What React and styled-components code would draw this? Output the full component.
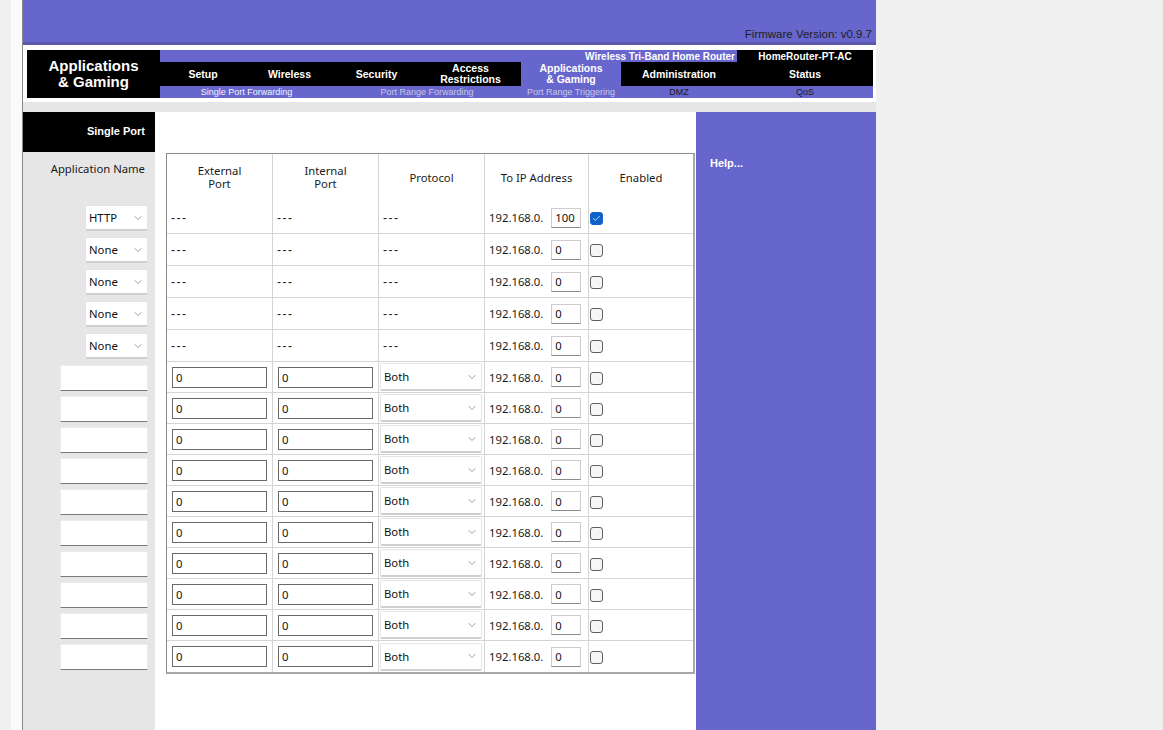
import React from "react";
import styled, { createGlobalStyle } from "styled-components";
import { ChevronDown, Check } from "lucide-react";

const PURPLE = "#6766cc";

const GlobalStyle = createGlobalStyle`
  *, *::before, *::after { box-sizing: border-box; }
  html, body { margin: 0; padding: 0; background: #f0f0f0; }
  body { font-family: "Noto Sans", "Liberation Sans", sans-serif; color: #1a1a1a; }
`;

const Page = styled.div`
  display: flex;
  min-height: 730px;
  padding-left: 11px;
`;

const Gutter = styled.div`
  width: 11px;
  background: #fafafa;
`;

const Frame = styled.div`
  width: 854px;
  border-left: 1px solid #8a8a8a;
  display: flex;
  flex-direction: column;
  background: #fff;
`;

const TopBar = styled.header`
  height: 45px;
  background: ${PURPLE};
  border-bottom: 3px solid #5b5aa8;
  display: flex;
  align-items: flex-end;
  justify-content: flex-end;
  padding: 0 4px 1px 0;
  font: 11.5px/14px "Liberation Sans", Arial, sans-serif;
  color: #1e1e1e;
`;

const NavWrap = styled.div`
  padding: 5px 3px 4px 4px;
  background: #fff;
`;

const Nav = styled.nav`
  display: grid;
  grid-template-columns: 133px 713px;
  height: 48px;
  font-family: "Liberation Sans", Arial, sans-serif;
  font-weight: bold;
  color: #fff;
`;

const Brand = styled.div`
  background: #000;
  display: flex;
  align-items: center;
  justify-content: center;
  text-align: center;
  font-size: 15px;
  line-height: 16px;
`;

const NavGrid = styled.div`
  display: grid;
  grid-template-columns: 86px 87px 87px 101px 100px 116px 136px;
  grid-template-rows: 12px 24px 12px;
`;

const Banner = styled.div`
  grid-column: 1 / 7;
  background: ${PURPLE};
  text-align: right;
  font-size: 10px;
  line-height: 13px;
  padding-right: 2px;
`;

const Model = styled.div`
  background: #000;
  text-align: center;
  font-size: 10px;
  line-height: 13px;
`;

const Tab = styled.div`
  background: ${(p) => (p.$active ? PURPLE : "#000")};
  display: flex;
  align-items: center;
  justify-content: center;
  text-align: center;
  font-size: 10.5px;
  line-height: 11px;
`;

const SubTab = styled.div`
  grid-column: span ${(p) => p.$span || 1};
  background: ${PURPLE};
  text-align: center;
  font: 9px/12px "Liberation Sans", Arial, sans-serif;
  color: ${(p) => p.$tone};
`;

const Band = styled.div`
  height: 10px;
  background: #e6e6e6;
`;

const Main = styled.div`
  flex: 1;
  display: grid;
  grid-template-columns: 132px 541px 180px;
`;

const LeftCol = styled.div`
  background: #e6e6e6;
`;

const SectionTitle = styled.div`
  height: 40px;
  background: #000;
  color: #fff;
  display: flex;
  align-items: center;
  justify-content: flex-end;
  padding: 0 10px 2px 0;
  font: bold 11px "Liberation Sans", Arial, sans-serif;
`;

const FieldLabel = styled.div`
  height: 50px;
  padding: 9px 10px 0 0;
  text-align: right;
  font-size: 11.3px;
  line-height: 15px;
`;

const LeftRow = styled.div`
  height: ${(p) => p.$h}px;
  display: flex;
  align-items: center;
  justify-content: flex-end;
  padding-right: 7px;
`;

const SelectBox = styled.div`
  width: ${(p) => p.$w}px;
  height: ${(p) => p.$h}px;
  display: flex;
  align-items: center;
  justify-content: space-between;
  padding: 0 3px 0 3px;
  background: #fff;
  border: 1px solid #e4e4e4;
  border-bottom: 2px solid #cfcfcf;
  border-radius: 2px;
  font-size: 11.3px;
  color: #111;
  svg { color: #5a5a5a; }
`;

const NameInput = styled.input`
  width: 88px;
  height: 26px;
  background: #fff;
  border: 1px solid #ececec;
  border-bottom: 1px solid #7a7a7a;
  padding: 0 3px;
  font: 11.3px "Noto Sans", sans-serif;
  outline: none;
`;

const Center = styled.div`
  background: #fff;
  padding: 41px 0 0 11px;
`;

const Table = styled.table`
  width: 528px;
  table-layout: fixed;
  border-collapse: separate;
  border-spacing: 0;
  border: 1px solid #8c8c8c;
  border-bottom-width: 2px;
  border-right-width: 2px;
  border-bottom-color: #a8a8a8;
  border-right-color: #a8a8a8;
  font-size: 11.3px;
`;

const Th = styled.th`
  width: ${(p) => p.$w}px;
  height: 48px;
  font-weight: normal;
  line-height: 13px;
  text-align: center;
  vertical-align: middle;
  padding: 0 4px 2px;
  border-right: ${(p) => (p.$last ? "none" : "1px solid #d4d4d4")};
`;

const Td = styled.td`
  height: ${(p) => p.$h}px;
  padding: 0 ${(p) => p.$pad ?? 4}px;
  vertical-align: middle;
  white-space: nowrap;
  border-right: ${(p) => (p.$last ? "none" : "1px solid #d4d4d4")};
  border-bottom: ${(p) => (p.$end ? "none" : "1px solid #d4d4d4")};
`;

const Dash = styled.span`
  font-family: "Liberation Sans", Arial, sans-serif;
  font-size: 12px;
  letter-spacing: 1.5px;
`;

const PortInput = styled.input`
  display: block;
  width: 95px;
  height: 21px;
  border: 1px solid #6a6a6a;
  padding: 0 3px;
  font: 11.3px "Noto Sans", sans-serif;
  color: #111;
  outline: none;
`;

const IpWrap = styled.div`
  display: flex;
  align-items: center;
  gap: 8px;
`;

const OctetInput = styled.input`
  width: 30px;
  height: 20px;
  border: 1px solid #cdcdcd;
  border-bottom-color: #8c8c8c;
  padding: 0 3px;
  font: 11.3px "Noto Sans", sans-serif;
  color: #111;
  outline: none;
`;

const Box = styled.span`
  display: inline-flex;
  align-items: center;
  justify-content: center;
  width: 13px;
  height: 13px;
  margin: 0 0 0 1px;
  vertical-align: middle;
  border-radius: 3px;
  border: 1px solid ${(p) => (p.$checked ? "#0f62c9" : "#5f5f5f")};
  background: ${(p) => (p.$checked ? "#0f62c9" : "#f6f6f6")};
  color: #fff;
`;

const HelpCol = styled.aside`
  background: ${PURPLE};
  padding: 44px 0 0 14px;
  color: #fff;
  font: bold 11px/14px "Liberation Sans", Arial, sans-serif;
`;

const tabs = [
  { label: "Setup" },
  { label: "Wireless" },
  { label: "Security" },
  { label: ["Access", "Restrictions"] },
  { label: ["Applications", "& Gaming"], active: true },
  { label: "Administration" },
  { label: "Status" },
];

const subTabs = [
  { label: "Single Port Forwarding", span: 2, tone: "#f4f4ff" },
  { label: "Port Range Forwarding", span: 2, tone: "#c9c9e4" },
  { label: "Port Range Triggering", tone: "#c9c9e4" },
  { label: "DMZ", tone: "#1a1a2a" },
  { label: "QoS", tone: "#1a1a2a" },
];

const presets = [
  { app: "HTTP", ip: "100", on: true },
  { app: "None", ip: "0" },
  { app: "None", ip: "0" },
  { app: "None", ip: "0" },
  { app: "None", ip: "0" },
];

const customs = Array.from({ length: 10 }, () => ({ ext: "0", int: "0", proto: "Both", ip: "0" }));

const Select = ({ value, w, h }) => (
  <SelectBox $w={w} $h={h}>
    <span>{value}</span>
    <ChevronDown size={12} strokeWidth={1.2} />
  </SelectBox>
);

const Checkbox = ({ checked }) => (
  <Box $checked={checked}>{checked && <Check size={9} strokeWidth={2} />}</Box>
);

const IpCell = ({ ip, h, end }) => (
  <Td $h={h} $end={end} $pad={4}>
    <IpWrap>
      <span>192.168.0.</span>
      <OctetInput readOnly value={ip} />
    </IpWrap>
  </Td>
);

export default function App() {
  return (
    <>
      <GlobalStyle />
      <Page>
        <Gutter />
        <Frame>
          <TopBar>Firmware Version: v0.9.7</TopBar>
          <NavWrap>
            <Nav>
              <Brand>
                Applications
                <br />& Gaming
              </Brand>
              <NavGrid>
                <Banner>Wireless Tri-Band Home Router</Banner>
                <Model>HomeRouter-PT-AC</Model>
                {tabs.map((t, i) => (
                  <Tab key={i} $active={t.active}>
                    {Array.isArray(t.label) ? (
                      <span>
                        {t.label[0]}
                        <br />
                        {t.label[1]}
                      </span>
                    ) : (
                      t.label
                    )}
                  </Tab>
                ))}
                {subTabs.map((s) => (
                  <SubTab key={s.label} $span={s.span} $tone={s.tone}>
                    {s.label}
                  </SubTab>
                ))}
              </NavGrid>
            </Nav>
          </NavWrap>
          <Band />
          <Main>
            <LeftCol>
              <SectionTitle>Single Port</SectionTitle>
              <FieldLabel>Application Name</FieldLabel>
              {presets.map((r, i) => (
                <LeftRow key={"p" + i} $h={32}>
                  <Select value={r.app} w={63} h={26} />
                </LeftRow>
              ))}
              {customs.map((r, i) => (
                <LeftRow key={"c" + i} $h={31}>
                  <NameInput readOnly value="" />
                </LeftRow>
              ))}
            </LeftCol>
            <Center>
              <Table>
                <thead>
                  <tr>
                    <Th $w={106}>
                      External
                      <br />
                      Port
                    </Th>
                    <Th $w={106}>
                      Internal
                      <br />
                      Port
                    </Th>
                    <Th $w={106}>Protocol</Th>
                    <Th $w={104}>To IP Address</Th>
                    <Th $w={104} $last>
                      Enabled
                    </Th>
                  </tr>
                </thead>
                <tbody>
                  {presets.map((r, i) => (
                    <tr key={"p" + i}>
                      <Td $h={32}>
                        <Dash>---</Dash>
                      </Td>
                      <Td $h={32}>
                        <Dash>---</Dash>
                      </Td>
                      <Td $h={32}>
                        <Dash>---</Dash>
                      </Td>
                      <IpCell ip={r.ip} h={32} />
                      <Td $h={32} $pad={0} $last>
                        <Checkbox checked={r.on} />
                      </Td>
                    </tr>
                  ))}
                  {customs.map((r, i) => {
                    const end = i === customs.length - 1;
                    return (
                      <tr key={"c" + i}>
                        <Td $h={31} $pad={5} $end={end}>
                          <PortInput readOnly value={r.ext} />
                        </Td>
                        <Td $h={31} $pad={5} $end={end}>
                          <PortInput readOnly value={r.int} />
                        </Td>
                        <Td $h={31} $pad={1} $end={end}>
                          <Select value={r.proto} w={102} h={28} />
                        </Td>
                        <IpCell ip={r.ip} h={31} end={end} />
                        <Td $h={31} $pad={0} $last $end={end}>
                          <Checkbox />
                        </Td>
                      </tr>
                    );
                  })}
                </tbody>
              </Table>
            </Center>
            <HelpCol>Help...</HelpCol>
          </Main>
        </Frame>
      </Page>
    </>
  );
}
